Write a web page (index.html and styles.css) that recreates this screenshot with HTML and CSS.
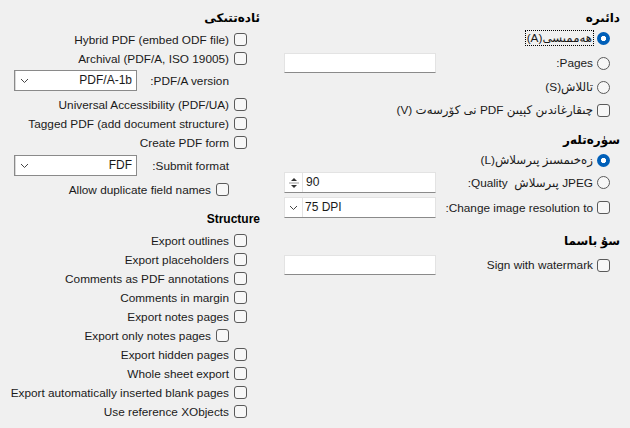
FILE: index.html
```html
<!DOCTYPE html>
<html lang="ug" dir="rtl">
<head>
<meta charset="utf-8">
<title>PDF</title>
<link rel="stylesheet" href="styles.css">
</head>
<body>
<div class="dialog">
  <section class="col col-right">
    <h3 class="heading">دائىرە</h3>
    <div class="row rr-a">
      <span class="opt"><span class="radio on"></span><span class="focus">ھەممىسى(A)</span></span>
    </div>
    <div class="row frow rr-pages">
      <span class="opt"><span class="radio"></span><span>Pages:</span></span>
      <span class="field"></span>
    </div>
    <div class="row rr-sel">
      <span class="opt"><span class="radio"></span><span>تاللاش(S)</span></span>
    </div>
    <div class="row rr-view">
      <span class="opt"><span class="check"></span><span>چىقارغاندىن كېيىن PDF نى كۆرسەت (V)</span></span>
    </div>

    <h3 class="heading hd-img">سۈرەتلەر</h3>
    <div class="row rr-lossless">
      <span class="opt"><span class="radio on"></span><span>زەخىمسىز پىرسلاش(L)</span></span>
    </div>
    <div class="row frow rr-jpeg">
      <span class="opt"><span class="radio"></span><span>JPEG پىرسلاش&nbsp; Quality:</span></span>
      <span class="field spin">
        <span class="spin-btn"><svg width="12" height="18" viewBox="0 0 12 18"><path d="M3 7 L6 4 L9 7 Z" fill="#333"/><path d="M1 9 H11" stroke="#9a9a9a" stroke-width="1"/><path d="M3 11 L6 14 L9 11 Z" fill="#333"/></svg></span>
        <span class="field-text">90</span>
      </span>
    </div>
    <div class="row frow rr-res">
      <span class="opt"><span class="check"></span><span>Change image resolution to:</span></span>
      <span class="field combo combo-ltr">
        <span class="combo-text">75 DPI</span>
        <span class="combo-btn"><svg width="9" height="6" viewBox="0 0 9 6"><path d="M1 1 L4.5 4.5 L8 1" fill="none" stroke="#444" stroke-width="1"/></svg></span>
      </span>
    </div>

    <h3 class="heading hd-wm">سۇ باسما</h3>
    <div class="row frow rr-sign">
      <span class="opt"><span class="check"></span><span>Sign with watermark</span></span>
      <span class="field"></span>
    </div>
  </section>

  <section class="col col-left">
    <h3 class="heading">ئادەتتىكى</h3>
    <div class="list first">
      <div class="crow"><span class="check"></span><span>Hybrid PDF (embed ODF file)</span></div>
      <div class="crow"><span class="check"></span><span>Archival (PDF/A, ISO 19005)</span></div>
    </div>
    <div class="comborow cr-pdfa">
      <span class="combo-label">PDF/A version:</span>
      <span class="box combo">
        <span class="combo-text">PDF/A-1b</span>
        <span class="combo-btn"><svg width="9" height="6" viewBox="0 0 9 6"><path d="M1 1 L4.5 4.5 L8 1" fill="none" stroke="#444" stroke-width="1"/></svg></span>
      </span>
    </div>
    <div class="list">
      <div class="crow cr-ua"><span class="check"></span><span>Universal Accessibility (PDF/UA)</span></div>
      <div class="crow"><span class="check"></span><span>Tagged PDF (add document structure)</span></div>
      <div class="crow"><span class="check"></span><span>Create PDF form</span></div>
    </div>
    <div class="comborow cr-submit">
      <span class="combo-label">Submit format:</span>
      <span class="box combo">
        <span class="combo-text">FDF</span>
        <span class="combo-btn"><svg width="9" height="6" viewBox="0 0 9 6"><path d="M1 1 L4.5 4.5 L8 1" fill="none" stroke="#444" stroke-width="1"/></svg></span>
      </span>
    </div>
    <div class="crow indent cr-allow"><span class="check"></span><span>Allow duplicate field names</span></div>

    <h3 class="heading hd-struct">Structure</h3>
    <div class="list first">
      <div class="crow"><span class="check"></span><span>Export outlines</span></div>
      <div class="crow"><span class="check"></span><span>Export placeholders</span></div>
      <div class="crow"><span class="check"></span><span>Comments as PDF annotations</span></div>
      <div class="crow"><span class="check"></span><span>Comments in margin</span></div>
      <div class="crow"><span class="check"></span><span>Export notes pages</span></div>
      <div class="crow indent"><span class="check"></span><span>Export only notes pages</span></div>
      <div class="crow"><span class="check"></span><span>Export hidden pages</span></div>
      <div class="crow"><span class="check"></span><span>Whole sheet export</span></div>
      <div class="crow"><span class="check"></span><span>Export automatically inserted blank pages</span></div>
      <div class="crow"><span class="check"></span><span>Use reference XObjects</span></div>
    </div>
  </section>
</div>
</body>
</html>
```

FILE: styles.css
```css
* { box-sizing: border-box; }
html, body {
  margin: 0;
  padding: 0;
  background: #f0f0f0;
}
body {
  width: 630px;
  height: 428px;
  overflow: hidden;
  font-family: "Liberation Sans", "DejaVu Sans", sans-serif;
  font-size: 11.8px;
  color: #1a1a1a;
}
.dialog {
  display: flex;
  justify-content: space-between;
  width: 630px;
  height: 428px;
}
.col { display: flex; flex-direction: column; padding-top: 10px; }
.col-right { width: 346px; padding-right: 10px; }
.col-left { width: 260px; }

.heading {
  margin: 0;
  height: 16px;
  line-height: 16px;
  font-size: 12px;
  font-weight: bold;
  color: #000;
  white-space: nowrap;
}

/* right column rows */
.row { display: flex; align-items: center; white-space: nowrap; }
.frow { display: grid; grid-template-columns: 1fr 152px; align-items: center; }
.opt { display: flex; align-items: center; gap: 4px; padding-right: 10px; }
.rr-a { height: 24px; }
.rr-pages { height: 26px; }
.rr-sel { height: 22px; }
.rr-view { height: 24px; }
.hd-img { margin-top: 10px; }
.rr-lossless { height: 24px; }
.rr-jpeg { height: 21px; }
.rr-res { height: 29px; }
.hd-wm { margin-top: 11px; }
.rr-sign { height: 22px; margin-top: 5px; }

.focus { outline: 1px dotted #000; outline-offset: 0; padding: 0 1px; line-height: 14px; }

.radio {
  flex: none;
  width: 13px;
  height: 13px;
  border-radius: 50%;
  border: 1px solid #5a5a5a;
  background: #f7f7f7;
}
.radio.on {
  border: none;
  background: radial-gradient(circle, #fff 0 2.4px, #005fb8 2.9px);
}
.check {
  flex: none;
  width: 13px;
  height: 13px;
  border-radius: 3px;
  border: 1px solid #5a5a5a;
  background: #f7f7f7;
}

.field {
  display: flex;
  height: 20px;
  background: #fff;
  border: 1px solid #e3e3e3;
  border-bottom-color: #8a8a8a;
}
.spin, .combo-ltr { height: 21px; }
.spin { direction: ltr; align-items: stretch; }
.spin-btn {
  width: 18px;
  display: flex;
  align-items: center;
  justify-content: center;
  border-right: 1px solid #e3e3e3;
}
.field-text { padding-left: 3px; line-height: 19px; font-size: 12px; }

.combo { display: flex; align-items: stretch; }
.combo-ltr { direction: ltr; flex-direction: row-reverse; justify-content: flex-end; }
.combo-btn {
  width: 18px;
  display: flex;
  align-items: center;
  justify-content: center;
  border-left: 1px solid #d9d9d9;
}
.combo-ltr .combo-btn { border-left: none; border-right: 1px solid #e3e3e3; }
.combo-text { flex: 1; line-height: 19px; font-size: 12px; padding: 0 3px; }
.combo-ltr .combo-text { flex: none; padding-left: 2px; }

/* left column */
.list { display: flex; flex-direction: column; }
.list.first { margin-top: 4px; }
.crow {
  display: flex;
  align-items: center;
  gap: 5px;
  height: 19px;
  padding-right: 13px;
  white-space: nowrap;
}
.crow.indent { padding-right: 31px; }
.cr-ua { height: 21px; padding-top: 2px; }
.cr-allow { height: 21px; }
.comborow {
  display: grid;
  grid-template-columns: 1fr 123px;
  column-gap: 11px;
  align-items: center;
  padding-right: 31px;
  padding-left: 14px;
  white-space: nowrap;
}
.cr-pdfa { height: 25px; }
.cr-submit { height: 27px; }
.box {
  height: 21px;
  background: #fff;
  border: 1px solid #8a8a8a;
}
.box .combo-text { text-align: right; padding-right: 4px; }
.hd-struct { margin-top: 11px; }
```
